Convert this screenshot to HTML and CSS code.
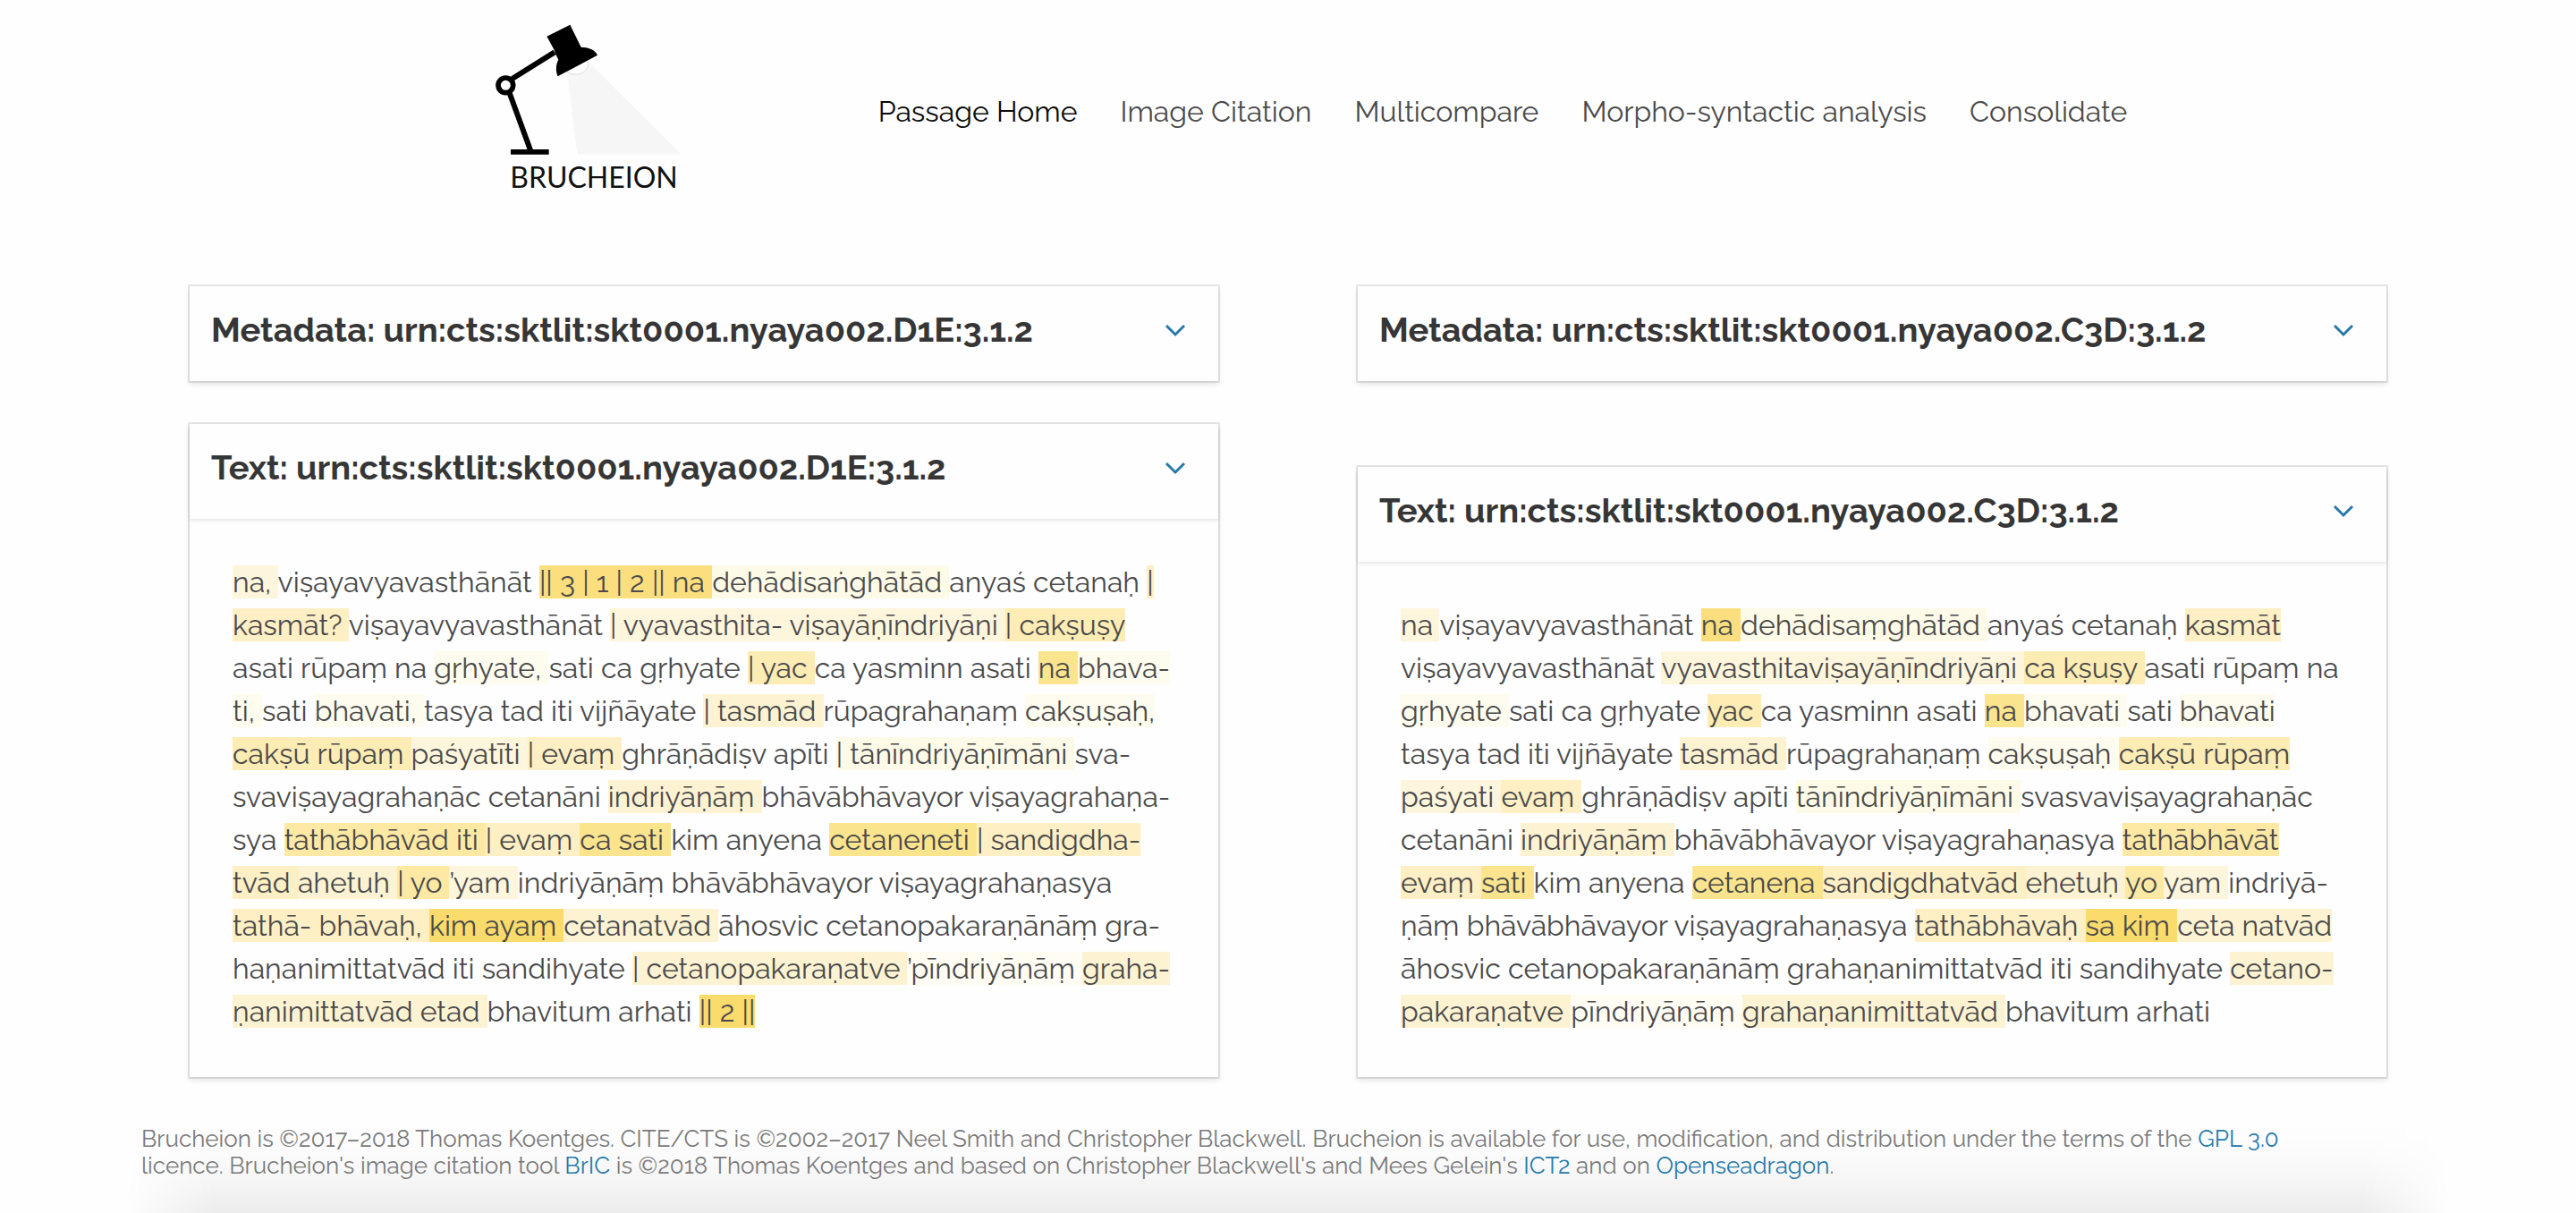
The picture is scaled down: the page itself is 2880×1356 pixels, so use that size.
FILE: index.html
```html
<!DOCTYPE html>
<html lang="en">
<head>
<meta charset="utf-8">
<title>Brucheion – Multicompare</title>
<link rel="stylesheet" href="styles.css">
</head>
<body>
<header class="site-header">
  <a class="logo" href="#" aria-label="Brucheion">
    <svg viewBox="-54 0 864 690" width="288" height="230" role="img" aria-hidden="true">
      <path d="M342 240 L410 205 L724 517 H376 Z" fill="#f6f6f6"/>
      <path d="M342 240 C352 251 378 254 396 242 C410 233 416 217 409 203 Z" fill="#fff" stroke="#ccc" stroke-width="2"/>
      <path d="M274 122 L352 83 L389 158 C412 158 436 166 444 185 L311 256 C303 239 304 215 313 200 L303 180 L298 166 Z"/>
      <path d="M300 175 L158 264 M149 312 L220 506" fill="none" stroke="#000" stroke-width="18"/>
      <circle cx="136" cy="286" r="25" fill="#fff" stroke="#000" stroke-width="17"/>
      <path d="M153 501 H281 V518 H153 Z"/>
      <text class="logo-name" x="151" y="629">BRUCHEION</text>
    </svg>
  </a>
  <nav class="nav">
    <a class="nav-link is-active" href="#">Passage Home</a>
    <a class="nav-link" href="#">Image Citation</a>
    <a class="nav-link" href="#">Multicompare</a>
    <a class="nav-link" href="#">Morpho-syntactic analysis</a>
    <a class="nav-link" href="#">Consolidate</a>
  </nav>
</header>

<main class="columns">
  <div class="column">
    <section class="card">
      <div class="card-header">
        <h2 class="card-title">Metadata: urn:cts:sktlit:skt0001.nyaya002.D1E:3.1.2</h2>
        <button class="toggle" type="button" aria-label="Toggle metadata"><svg viewBox="0 0 24 16" width="24" height="16"><path d="M2 3 L12 13 L22 3"/></svg></button>
      </div>
    </section>
    <section class="card">
      <div class="card-header is-open">
        <h2 class="card-title">Text: urn:cts:sktlit:skt0001.nyaya002.D1E:3.1.2</h2>
        <button class="toggle" type="button" aria-label="Toggle text"><svg viewBox="0 0 24 16" width="24" height="16"><path d="M2 3 L12 13 L22 3"/></svg></button>
      </div>
      <p class="passage" lang="sa-Latn"><mark class="w4">na, </mark>viṣayavyavasthānāt <mark class="w10">|| 3 | 1 | 2 || na </mark><mark class="w3">dehādisaṅghātād </mark>anyaś cetanaḥ <mark class="w6">| kasmāt? </mark>viṣayavyavasthānāt <mark class="w4">| vyavasthita- viṣayāṇīndriyāṇi </mark><mark class="w7">| cakṣuṣy </mark>asati rūpaṃ na <mark class="w2">gṛhyate, </mark>sati ca gṛhyate <mark class="w7">| yac </mark>ca yasminn asati <mark class="w9">na </mark><mark class="w2">bhava&shy;ti, </mark>sati <mark class="w2">bhavati, </mark>tasya tad iti vijñāyate <mark class="w5">| tasmād </mark>rūpagrahaṇaṃ <mark class="w2">cakṣuṣaḥ, </mark><mark class="w7">cakṣū rūpaṃ </mark><mark class="w4">paśyatīti </mark><mark class="w6">| evaṃ </mark>ghrāṇādiṣv apīti <mark class="w3">| tānīndriyāṇīmāni </mark>sva&shy;svaviṣayagrahaṇāc cetanāni <mark class="w5">indriyāṇāṃ </mark>bhāvābhāvayor viṣayagrahaṇa&shy;sya <mark class="w8">tathābhāvād iti </mark><mark class="w6">| evaṃ </mark><mark class="w9">ca sati </mark>kim anyena <mark class="w9">cetaneneti </mark><mark class="w6">| sandigdha&shy;tvād </mark><mark class="w5">ahetuḥ </mark><mark class="w8">| yo </mark><mark class="w4">’yam </mark>indriyāṇāṃ bhāvābhāvayor viṣayagrahaṇasya <mark class="w6">tathā- bhāvaḥ, </mark><mark class="w11">kim ayaṃ </mark><mark class="w5">cetanatvād </mark>āhosvic cetanopakaraṇānāṃ gra&shy;haṇanimittatvād iti sandihyate <mark class="w5">| cetanopakaraṇatve </mark><mark class="w1">’pīndriyāṇāṃ </mark><mark class="w5">graha&shy;ṇanimittatvād etad </mark>bhavitum arhati <mark class="w11">|| 2 ||</mark></p>
    </section>
  </div>

  <div class="column is-offset">
    <section class="card">
      <div class="card-header">
        <h2 class="card-title">Metadata: urn:cts:sktlit:skt0001.nyaya002.C3D:3.1.2</h2>
        <button class="toggle" type="button" aria-label="Toggle metadata"><svg viewBox="0 0 24 16" width="24" height="16"><path d="M2 3 L12 13 L22 3"/></svg></button>
      </div>
    </section>
    <section class="card">
      <div class="card-header is-open">
        <h2 class="card-title">Text: urn:cts:sktlit:skt0001.nyaya002.C3D:3.1.2</h2>
        <button class="toggle" type="button" aria-label="Toggle text"><svg viewBox="0 0 24 16" width="24" height="16"><path d="M2 3 L12 13 L22 3"/></svg></button>
      </div>
      <p class="passage" lang="sa-Latn"><mark class="w4">na </mark>viṣayavyavasthānāt <mark class="w10">na </mark><mark class="w3">dehādisaṃghātād </mark>anyaś cetanaḥ <mark class="w6">kasmāt </mark>viṣayavyavasthānāt <mark class="w4">vyavasthitaviṣayāṇīndriyāṇi </mark><mark class="w7">ca kṣuṣy </mark>asati rūpaṃ na <mark class="w2">gṛhyate </mark>sati ca gṛhyate <mark class="w7">yac </mark>ca yasminn asati <mark class="w9">na </mark><mark class="w2">bhavati </mark>sati <mark class="w2">bhavati </mark>tasya tad iti vijñāyate <mark class="w5">tasmād </mark>rūpagrahaṇaṃ <mark class="w2">cakṣuṣaḥ </mark><mark class="w7">cakṣū rūpaṃ </mark><mark class="w4">paśyati </mark><mark class="w6">evaṃ </mark>ghrāṇādiṣv apīti <mark class="w3">tānīndriyāṇīmāni </mark>svasvaviṣayagrahaṇāc cetanāni <mark class="w5">indriyāṇāṃ </mark>bhāvābhāvayor viṣayagrahaṇasya <mark class="w8">tathābhāvāt </mark><mark class="w6">evaṃ </mark><mark class="w9">sati </mark>kim anyena <mark class="w9">cetanena </mark><mark class="w6">sandigdhatvād </mark><mark class="w5">ehetuḥ </mark><mark class="w8">yo </mark><mark class="w4">yam </mark>indriyā&shy;ṇāṃ bhāvābhāvayor viṣayagrahaṇasya <mark class="w6">tathābhāvaḥ </mark><mark class="w11">sa kiṃ </mark><mark class="w5">ceta natvād </mark>āhosvic cetanopakaraṇānāṃ grahaṇanimittatvād iti sandihyate <mark class="w5">cetano&shy;pakaraṇatve </mark><mark class="w1">pīndriyāṇāṃ </mark><mark class="w5">grahaṇanimittatvād </mark>bhavitum arhati</p>
    </section>
  </div>
</main>

<footer class="site-footer">
  <p>Brucheion is ©2017–2018 Thomas Koentges. CITE/CTS is ©2002–2017 Neel Smith and Christopher Blackwell. Brucheion is available for use, modification, and distribution under the terms of the <a href="#">GPL 3.0</a> licence. Brucheion's image citation tool <a href="#">BrIC</a> is ©2018 Thomas Koentges and based on Christopher Blackwell's and Mees Gelein's <a href="#">ICT2</a> and on <a href="#">Openseadragon</a>.</p>
</footer>
</body>
</html>
```
FILE: styles.css
```css
*,
*::before,
*::after {
  box-sizing: border-box;
}

body {
  position: relative;
  min-height: 100vh;
  margin: 0;
  background: #fefefe;
  color: #4a4a4a;
  font-family: Raleway, Lato, "Open Sans", sans-serif;
  font-size: 32px;
  line-height: 48px;
}

/* soft shade rising from the lower edge of the page */
body::after {
  content: "";
  position: absolute;
  z-index: -1;
  bottom: 0;
  left: 140px;
  right: 140px;
  height: 100px;
  background: linear-gradient(to top, rgba(0, 0, 0, 0.07), rgba(0, 0, 0, 0.04) 30%, rgba(0, 0, 0, 0.01) 65%, transparent);
  -webkit-mask-image: linear-gradient(to right, transparent, #000 100px, #000 calc(100% - 100px), transparent);
  mask-image: linear-gradient(to right, transparent, #000 100px, #000 calc(100% - 100px), transparent);
}

a {
  color: #2779aa;
  text-decoration: none;
}

.site-header {
  display: flex;
  justify-content: center;
  align-items: center;
  gap: 192px;
  height: 230px;
}

.logo svg {
  display: block;
}

.logo-name {
  font-family: Lato, sans-serif;
  font-size: 96px;
  fill: #111;
}

.nav {
  display: flex;
  gap: 48px;
  padding-top: 20px;
  white-space: nowrap;
}

.nav-link {
  color: #4a4a4a;
}

.nav-link.is-active {
  color: #0a0a0a;
}

.columns {
  display: grid;
  grid-template-columns: 1fr 1fr;
  gap: 156px;
  padding: 90px 212px 0;
}

.column {
  display: flex;
  flex-direction: column;
  gap: 48px;
}

.column.is-offset {
  gap: 96px;
}

.card {
  background: #fefefe;
  box-shadow: 0 4px 6px rgba(10, 10, 10, 0.1), 0 0 0 2px rgba(10, 10, 10, 0.1);
}

.card-header {
  display: flex;
  align-items: flex-start;
  justify-content: space-between;
  padding: 25px 0 33px 24px;
}

.card-header.is-open {
  box-shadow: 0 2px 4px rgba(10, 10, 10, 0.1);
}

.card-title {
  margin: 0;
  color: #363636;
  font-size: 38px;
  font-weight: 700;
  line-height: 48px;
}

.toggle {
  display: flex;
  align-items: center;
  justify-content: center;
  width: 96px;
  height: 48px;
  padding: 0;
  border: 0;
  background: none;
  cursor: pointer;
}

.toggle path {
  fill: none;
  stroke: #2779aa;
  stroke-width: 3;
}

.passage {
  margin: 0;
  padding: 47px 48px 49px;
  hyphens: manual;
}

mark {
  color: inherit;
}

.w1 { background: #fffcf3; }
.w2 { background: #fefcee; }
.w3 { background: #fefae8; }
.w4 { background: #fef5dd; }
.w5 { background: #fdf3d3; }
.w6 { background: #feefc5; }
.w7 { background: #fdecb4; }
.w8 { background: #fde9a4; }
.w9 { background: #fbe48e; }
.w10 { background: #fbdf7e; }
.w11 { background: #fadb6c; }

.site-footer {
  padding: 54px 280px 38px 158px;
  color: #7a7a7a;
  font-size: 26px;
  line-height: 30px;
}

.site-footer p {
  margin: 0;
}
```
